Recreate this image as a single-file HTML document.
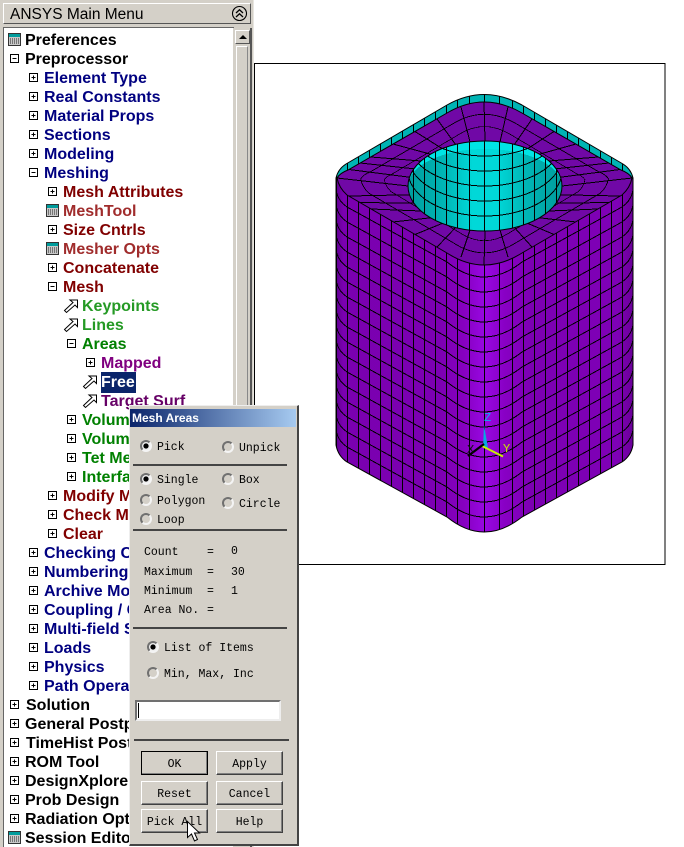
<!DOCTYPE html>
<html><head><meta charset="utf-8"><title>ANSYS Main Menu</title>
<style>
html,body{margin:0;padding:0;background:#fff}
#page{position:relative;width:684px;height:847px;overflow:hidden;background:#fff;font-family:"Liberation Sans",sans-serif}
.abs{position:absolute}
#gfx{position:absolute;left:0;top:0}
#left{position:absolute;left:0;top:0;width:254px;height:847px;background:#d4d0c8;border-right:1px solid #e8e6e0;box-sizing:border-box}
#title{position:absolute;left:3px;top:3px;width:248px;height:21px;box-sizing:border-box;border:1px solid;border-color:#fff #555 #555 #fff;background:#d4d0c8;font-size:15.5px;line-height:22px;color:#000;padding-left:6px}
#tree{position:absolute;left:3px;top:27px;width:230px;height:819px;background:#fff;border-top:1px solid #666;border-left:1px solid #666;overflow:hidden}
.r{position:absolute;height:19px;line-height:19px;font-size:16px;font-weight:bold;white-space:nowrap}
.r svg{position:absolute;top:0;left:0;width:19px;height:19px}
.r span{position:absolute;left:0;top:1px}
.k{color:#000}.n{color:#000080}.d{color:#800000}.m{color:#a02c2c}.g{color:#008000}.h{color:#259a25}.p{color:#800080}.q{color:#660066}
#sb{position:absolute;left:233px;top:28px;width:17px;height:819px;background:#d4d0c8;border-right:2px solid #555;box-sizing:content-box}
#dlg{position:absolute;left:129px;top:405px;width:170px;height:441px;box-sizing:border-box;background:#d4d0c8;border:1px solid;border-color:#eee #444 #444 #eee;border-right-width:2px;border-bottom-width:2px}
#bar{position:absolute;left:0;top:3px;width:166px;height:18px;background:linear-gradient(90deg,#0a246a,#a6caf0);color:#fff;font-size:12px;font-weight:bold;line-height:18px;padding-left:2px;box-sizing:border-box}
.t{position:absolute;font-family:"Liberation Mono",monospace;font-size:11.5px;line-height:14px;color:#000;white-space:pre;margin:1px 0 0 1px}
.o{position:absolute;width:12px;height:12px;box-sizing:border-box;border-radius:50%;border:2px solid;border-color:#707070 #f4f4f4 #f4f4f4 #707070;background:#d4d0c8}
.o.c{background:radial-gradient(circle,#000 0,#000 2.4px,#eee 2.8px)}
.s{position:absolute;height:2px;background:#444}
.b{position:absolute;width:67px;height:24px;box-sizing:border-box;border:1px solid;border-color:#fff #404040 #404040 #fff;box-shadow:inset -1px -1px 0 #808080;background:#d4d0c8;font-family:"Liberation Mono",monospace;font-size:11.5px;line-height:26px;text-align:center;color:#000}
</style></head><body>
<div id="page">

<svg id="gfx" width="684" height="847" viewBox="0 0 684 847">
<defs>
<linearGradient id="bodyG" x1="336" x2="633" y1="0" y2="0" gradientUnits="userSpaceOnUse">
<stop offset="0" stop-color="#5f0090"/><stop offset=".025" stop-color="#7a00b0"/><stop offset=".35" stop-color="#7c00b2"/><stop offset=".43" stop-color="#8600c0"/><stop offset=".5" stop-color="#9808e2"/><stop offset=".57" stop-color="#8800c4"/><stop offset=".66" stop-color="#7c00b2"/><stop offset=".95" stop-color="#7e00b6"/><stop offset="1" stop-color="#6a0098"/>
</linearGradient>
<linearGradient id="holeG" x1="408" x2="562" y1="0" y2="0" gradientUnits="userSpaceOnUse">
<stop offset="0" stop-color="#009c9c"/><stop offset=".25" stop-color="#00b8b8"/><stop offset=".42" stop-color="#00d8d8"/><stop offset=".58" stop-color="#00d8d8"/><stop offset=".75" stop-color="#00b8b8"/><stop offset="1" stop-color="#009c9c"/>
</linearGradient>
<path id="all" d="M336 178Q338 169 346 164L447 105Q484 84 522 105L623 164Q631 169 633 178V445Q631 456 622 462L522 517Q484 547 447 517L347 462Q338 456 336 445Z"/>
<clipPath id="cAll"><use href="#all"/></clipPath>
<path id="face" d="M337 178Q340 173 348 170L447 113Q484 91 522 113L621 170Q629 173 632 178Q630 188 622 195L522 253Q484 277 447 253L347 195Q339 188 337 178Z"/>
<clipPath id="cFace"><use href="#face"/></clipPath>
<clipPath id="cHole"><ellipse cx="485" cy="186" rx="77" ry="45"/></clipPath>
<path id="vee" fill="none" stroke="#000" stroke-width="1" d="M336 445Q338 456 347 462L447 517Q484 547 522 517L622 462Q631 456 633 445"/>
<path id="vert" fill="none" stroke="#000" stroke-width="1" d="M336.5 60V560M347.5 60V560M358.5 60V560M369.5 60V560M380.5 60V560M391.5 60V560M402.5 60V560M413.5 60V560M424.5 60V560M435.5 60V560M446.5 60V560M457.5 60V560M469.5 60V560M484.5 60V560M499.5 60V560M512.5 60V560M523.5 60V560M534.5 60V560M545.5 60V560M556.5 60V560M567.5 60V560M578.5 60V560M589.5 60V560M600.5 60V560M611.5 60V560M622.5 60V560M633.5 60V560"/>
</defs>

<rect x="254.5" y="63.5" width="410.5" height="501" fill="#fff" stroke="#000"/>

<use href="#all" fill="#00b4b4"/>
<path d="M336 177H633V445Q631 456 622 462L522 517Q484 547 447 517L347 462Q338 456 336 445Z" fill="url(#bodyG)" clip-path="url(#cAll)"/>
<g clip-path="url(#cAll)" shape-rendering="crispEdges">
<use href="#vert"/>
<use href="#vee" y="-15"/><use href="#vee" y="-30"/><use href="#vee" y="-45"/><use href="#vee" y="-60"/><use href="#vee" y="-75"/><use href="#vee" y="-90"/><use href="#vee" y="-105"/><use href="#vee" y="-120"/><use href="#vee" y="-135"/><use href="#vee" y="-150"/><use href="#vee" y="-165"/><use href="#vee" y="-180"/><use href="#vee" y="-195"/><use href="#vee" y="-210"/><use href="#vee" y="-225"/><use href="#vee" y="-240"/><use href="#vee" y="-255"/>
</g>
<use href="#all" fill="none" stroke="#000" stroke-width="1"/>

<use href="#face" fill="#7008a6" stroke="#000" stroke-width="1"/>
<g clip-path="url(#cFace)" fill="none" stroke="#000" stroke-width="1" shape-rendering="crispEdges">
<path d="M562 186L632 178M560.5 194.8L620 196M556.1 203.2L609 202.5M549 211L598 209M539.4 217.8L576 222M527.8 223.4L554 234.5M514.5 227.6L532 247M500 230.1L508 257M485 231L484 265
M408 186L337 178M409.5 194.8L349 196M413.9 203.2L360 202.5M421 211L371 209M430.6 217.8L393 222M442.2 223.4L415 234.5M455.5 227.6L437 247M470 230.1L461 257
M560.5 177.2L620 169.5M556.1 168.8L609 163M549 161L598 157M539.4 154.2L576 144M527.8 148.6L554 131.5M514.5 144.4L532 119M500 141.9L508 107M485 141L484 102
M409.5 177.2L349 169.5M413.9 168.8L360 163M421 161L371 157M430.6 154.2L393 144M442.2 148.6L415 131.5M455.5 144.4L437 119M470 141.9L461 107"/>
<use href="#face" transform="translate(485 184) scale(.84 .85) translate(-485 -184)"/>
<use href="#face" transform="translate(485 184) scale(.68 .7) translate(-485 -184)"/>
</g>

<ellipse cx="485" cy="186" rx="77" ry="45" fill="url(#holeG)"/>
<g clip-path="url(#cHole)" shape-rendering="crispEdges">
<path d="M408 186A77 45 0 0 1 562 186A77 37 0 0 0 408 186Z" fill="#00e4e4"/>
<use href="#vert"/>
<g fill="none" stroke="#000" stroke-width="1">
<ellipse cx="485" cy="156" rx="77" ry="45"/><ellipse cx="485" cy="141" rx="77" ry="45"/><ellipse cx="485" cy="171" rx="77" ry="45"/><ellipse cx="485" cy="126" rx="77" ry="45"/><ellipse cx="485" cy="111" rx="77" ry="45"/>
</g>
</g>
<ellipse cx="485" cy="186" rx="77" ry="45" fill="none" stroke="#000" stroke-width="1"/>

<path d="M484 425L483 448H488Z" fill="#08a8e0"/>
<path d="M482 446L503 456.5" stroke="#c8f000" stroke-width="2" fill="none"/>
<path d="M484 444L468 456" stroke="#000" stroke-width="2.2" fill="none"/>
<text x="484" y="421" font-family="Liberation Mono,monospace" font-size="12" fill="#10a8f0">Z</text>
<text x="503" y="452" font-family="Liberation Mono,monospace" font-size="12" fill="#c8e800">Y</text>
<text x="467" y="453" font-family="Liberation Mono,monospace" font-size="12" fill="#101010">X</text>
</svg>

<div id="left">
<svg width="0" height="0" style="position:absolute">
<defs>
<g id="pl"><rect x="5.5" y="5.5" width="8" height="8" fill="#fff" stroke="#000"/><path d="M7.5 9.5H11.5M9.5 7.5V11.5" stroke="#000"/></g>
<g id="mi"><rect x="5.5" y="5.5" width="8" height="8" fill="#fff" stroke="#000"/><path d="M7.5 9.5H11.5" stroke="#000"/></g>
<g id="ca"><rect x="3.5" y="3.5" width="12" height="12" fill="#c8c8c8" stroke="#333"/><rect x="4" y="4" width="11" height="3" fill="#009c9c"/><path d="M5 9h1M7 9h1M9 9h1M11 9h1M13 9h1M5 11h1M7 11h1M9 11h1M11 11h1M13 11h1M5 13h1M7 13h1M9 13h1M11 13h1M13 13h1" stroke="#222" stroke-width="1" fill="none"/></g>
<g id="ar"><path d="M2.5 14.5L11 6.5L8 4H15.5V11.5L13 9L4.5 16.5Z" fill="#fff" stroke="#000"/></g>
</defs>
</svg>
<div id="title">ANSYS Main Menu
<svg class="abs" style="left:227px;top:1px" width="17" height="17" viewBox="0 0 17 17"><circle cx="8.5" cy="8.5" r="7" fill="none" stroke="#000" stroke-width="1.1"/><path d="M5 8L8.5 4.8L12 8M5 12L8.5 8.8L12 12" fill="none" stroke="#000" stroke-width="1.3"/></svg>
</div>
<div id="tree">
<div class="r k" style="left:1px;top:2px"><svg><use href="#ca"/></svg><span style="left:20px">Preferences</span></div>
<div class="r k" style="left:1px;top:21px"><svg><use href="#mi"/></svg><span style="left:20px">Preprocessor</span></div>
<div class="r n" style="left:20px;top:40px"><svg><use href="#pl"/></svg><span style="left:20px">Element Type</span></div>
<div class="r n" style="left:20px;top:59px"><svg><use href="#pl"/></svg><span style="left:20px">Real Constants</span></div>
<div class="r n" style="left:20px;top:78px"><svg><use href="#pl"/></svg><span style="left:20px">Material Props</span></div>
<div class="r n" style="left:20px;top:97px"><svg><use href="#pl"/></svg><span style="left:20px">Sections</span></div>
<div class="r n" style="left:20px;top:116px"><svg><use href="#pl"/></svg><span style="left:20px">Modeling</span></div>
<div class="r n" style="left:20px;top:135px"><svg><use href="#mi"/></svg><span style="left:20px">Meshing</span></div>
<div class="r d" style="left:39px;top:154px"><svg><use href="#pl"/></svg><span style="left:20px">Mesh Attributes</span></div>
<div class="r m" style="left:39px;top:173px"><svg><use href="#ca"/></svg><span style="left:20px">MeshTool</span></div>
<div class="r d" style="left:39px;top:192px"><svg><use href="#pl"/></svg><span style="left:20px">Size Cntrls</span></div>
<div class="r m" style="left:39px;top:211px"><svg><use href="#ca"/></svg><span style="left:20px">Mesher Opts</span></div>
<div class="r d" style="left:39px;top:230px"><svg><use href="#pl"/></svg><span style="left:20px">Concatenate</span></div>
<div class="r d" style="left:39px;top:249px"><svg><use href="#mi"/></svg><span style="left:20px">Mesh</span></div>
<div class="r h" style="left:58px;top:268px"><svg><use href="#ar"/></svg><span style="left:20px">Keypoints</span></div>
<div class="r h" style="left:58px;top:287px"><svg><use href="#ar"/></svg><span style="left:20px">Lines</span></div>
<div class="r g" style="left:58px;top:306px"><svg><use href="#mi"/></svg><span style="left:20px">Areas</span></div>
<div class="r p" style="left:77px;top:325px"><svg><use href="#pl"/></svg><span style="left:20px">Mapped</span></div>
<div class="r" style="left:77px;top:344px"><svg><use href="#ar"/></svg><span style="left:20px;top:0;line-height:21px;background:#0a246a;color:#fff;padding-right:1px">Free</span></div>
<div class="r q" style="left:77px;top:363px"><svg><use href="#ar"/></svg><span style="left:20px">Target Surf</span></div>
<div class="r g" style="left:58px;top:382px"><svg><use href="#pl"/></svg><span style="left:20px">Volumes</span></div>
<div class="r g" style="left:58px;top:401px"><svg><use href="#pl"/></svg><span style="left:20px">Volume</span></div>
<div class="r g" style="left:58px;top:420px"><svg><use href="#pl"/></svg><span style="left:20px">Tet Mesh</span></div>
<div class="r g" style="left:58px;top:439px"><svg><use href="#pl"/></svg><span style="left:20px">Interface</span></div>
<div class="r d" style="left:39px;top:458px"><svg><use href="#pl"/></svg><span style="left:20px">Modify Mesh</span></div>
<div class="r d" style="left:39px;top:477px"><svg><use href="#pl"/></svg><span style="left:20px">Check Mesh</span></div>
<div class="r d" style="left:39px;top:496px"><svg><use href="#pl"/></svg><span style="left:20px">Clear</span></div>
<div class="r n" style="left:20px;top:515px"><svg><use href="#pl"/></svg><span style="left:20px">Checking Ctrls</span></div>
<div class="r n" style="left:20px;top:534px"><svg><use href="#pl"/></svg><span style="left:20px">Numbering Ctrls</span></div>
<div class="r n" style="left:20px;top:553px"><svg><use href="#pl"/></svg><span style="left:20px">Archive Model</span></div>
<div class="r n" style="left:20px;top:572px"><svg><use href="#pl"/></svg><span style="left:20px">Coupling / Ceqn</span></div>
<div class="r n" style="left:20px;top:591px"><svg><use href="#pl"/></svg><span style="left:20px">Multi-field Set Up</span></div>
<div class="r n" style="left:20px;top:610px"><svg><use href="#pl"/></svg><span style="left:20px">Loads</span></div>
<div class="r n" style="left:20px;top:629px"><svg><use href="#pl"/></svg><span style="left:20px">Physics</span></div>
<div class="r n" style="left:20px;top:648px"><svg><use href="#pl"/></svg><span style="left:20px">Path Operations</span></div>
<div class="r k" style="left:1px;top:667px"><svg><use href="#pl"/></svg><span style="left:21px">Solution</span></div>
<div class="r k" style="left:1px;top:686px"><svg><use href="#pl"/></svg><span style="left:20px">General Postproc</span></div>
<div class="r k" style="left:1px;top:705px"><svg><use href="#pl"/></svg><span style="left:21px">TimeHist Postpro</span></div>
<div class="r k" style="left:1px;top:724px"><svg><use href="#pl"/></svg><span style="left:20px">ROM Tool</span></div>
<div class="r k" style="left:1px;top:743px"><svg><use href="#pl"/></svg><span style="left:20px">DesignXplorer</span></div>
<div class="r k" style="left:1px;top:762px"><svg><use href="#pl"/></svg><span style="left:20px">Prob Design</span></div>
<div class="r k" style="left:1px;top:781px"><svg><use href="#pl"/></svg><span style="left:20px">Radiation Opt</span></div>
<div class="r k" style="left:1px;top:800px"><svg><use href="#ca"/></svg><span style="left:20px">Session Editor</span></div>
</div>
<div id="sb">
<div class="abs" style="left:2px;top:2px;width:15px;height:14px;box-sizing:border-box;border:1px solid;border-color:#fff #555 #555 #fff;background:#d4d0c8">
<svg class="abs" style="left:3px;top:3px" width="8" height="6"><path d="M0 5L4 1L8 5Z" fill="#000"/></svg></div>
<div class="abs" style="left:3px;top:18px;width:12px;height:800px;box-sizing:border-box;border:1px solid;border-color:#fff #888 #888 #fff;background:#d4d0c8"></div>
</div>
</div>

<div id="dlg">
<div id="bar">Mesh Areas</div>
<div class="o c" style="left:10px;top:34px"></div><div class="t" style="left:26px;top:34px">Pick</div>
<div class="o" style="left:92px;top:35px"></div><div class="t" style="left:108px;top:35px">Unpick</div>
<div class="s" style="left:3px;top:58px;width:154px"></div>
<div class="o c" style="left:10px;top:67px"></div><div class="t" style="left:26px;top:67px">Single</div>
<div class="o" style="left:92px;top:67px"></div><div class="t" style="left:108px;top:67px">Box</div>
<div class="o" style="left:10px;top:88px"></div><div class="t" style="left:26px;top:88px">Polygon</div>
<div class="o" style="left:92px;top:91px"></div><div class="t" style="left:108px;top:91px">Circle</div>
<div class="o" style="left:10px;top:107px"></div><div class="t" style="left:26px;top:107px">Loop</div>
<div class="s" style="left:3px;top:123px;width:154px"></div>
<div class="t" style="left:13px;top:139px">Count</div><div class="t" style="left:76px;top:139px">=</div><div class="t" style="left:100px;top:138px">0</div>
<div class="t" style="left:13px;top:159px">Maximum</div><div class="t" style="left:76px;top:159px">=</div><div class="t" style="left:100px;top:159px">30</div>
<div class="t" style="left:13px;top:178px">Minimum</div><div class="t" style="left:76px;top:178px">=</div><div class="t" style="left:100px;top:178px">1</div>
<div class="t" style="left:13px;top:197px">Area No.</div><div class="t" style="left:76px;top:197px">=</div>
<div class="s" style="left:3px;top:221px;width:154px"></div>
<div class="o c" style="left:17px;top:235px"></div><div class="t" style="left:33px;top:235px">List of Items</div>
<div class="o" style="left:17px;top:261px"></div><div class="t" style="left:33px;top:261px">Min, Max, Inc</div>
<div class="abs" style="left:5px;top:294px;width:146px;height:21px;box-sizing:border-box;background:#fff;border:2px solid;border-color:#707070 #eee #eee #707070"><div class="abs" style="left:1px;top:1px;width:1px;height:15px;background:#000"></div></div>
<div class="s" style="left:4px;top:333px;width:155px"></div>
<div class="b" style="left:11px;top:345px;outline:1px solid #000;outline-offset:-1px">OK</div><div class="b" style="left:86px;top:345px">Apply</div>
<div class="b" style="left:11px;top:375px">Reset</div><div class="b" style="left:86px;top:375px">Cancel</div>
<div class="b" style="left:11px;top:403px">Pick All</div><div class="b" style="left:86px;top:403px">Help</div>
</div>

<svg class="abs" style="left:185px;top:820px" width="18" height="24" viewBox="0 0 18 24"><path d="M2.5 1.5V17.5L6.5 14L9.5 21L12.5 19.5L9.5 13H14.5Z" fill="#fff" stroke="#000"/></svg>

</div>
</body></html>
